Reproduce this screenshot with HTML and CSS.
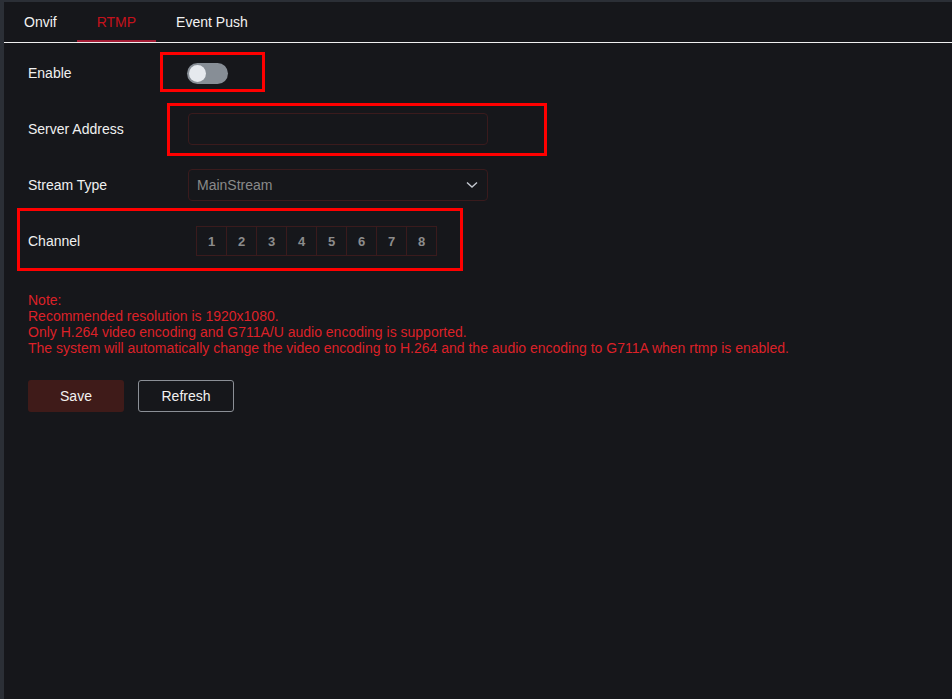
FILE: index.html
```html
<!DOCTYPE html>
<html>
<head>
<meta charset="utf-8">
<link rel="stylesheet" href="styles.css">
</head>
<body>
<div class="frame">
  <div class="tabs">
    <div class="tab">Onvif</div>
    <div class="tab active">RTMP</div>
    <div class="tab">Event Push</div>
  </div>
  <div class="form">
    <div class="row">
      <div class="label">Enable</div>
      <div class="switch"><span class="knob"></span></div>
    </div>
    <div class="row">
      <div class="label">Server Address</div>
      <div class="input"></div>
    </div>
    <div class="row">
      <div class="label">Stream Type</div>
      <div class="input select">
        <span class="value">MainStream</span>
        <svg class="chev" width="12" height="8" viewBox="0 0 12 8"><path d="M1 1.5 L6 6 L11 1.5" fill="none" stroke="#c4c8d0" stroke-width="1.4"/></svg>
      </div>
    </div>
    <div class="row">
      <div class="label">Channel</div>
      <div class="channels">
        <div class="ch">1</div><div class="ch">2</div><div class="ch">3</div><div class="ch">4</div>
        <div class="ch">5</div><div class="ch">6</div><div class="ch">7</div><div class="ch">8</div>
      </div>
    </div>
    <div class="note">
      <div>Note:</div>
      <div>Recommended resolution is 1920x1080.</div>
      <div>Only H.264 video encoding and G711A/U audio encoding is supported.</div>
      <div>The system will automatically change the video encoding to H.264 and the audio encoding to G711A when rtmp is enabled.</div>
    </div>
    <div class="buttons">
      <button class="btn save">Save</button>
      <button class="btn refresh">Refresh</button>
    </div>
  </div>
  <div class="mark m1"></div>
  <div class="mark m2"></div>
  <div class="mark m3"></div>
</div>
</body>
</html>
```

FILE: styles.css
```css
html, body {
  margin: 0;
  padding: 0;
  width: 952px;
  height: 699px;
  overflow: hidden;
  background: #2b2f36;
  font-family: "Liberation Sans", Arial, sans-serif;
  font-size: 14px;
}
.frame {
  position: relative;
  margin: 2px 0 0 4px;
  height: 697px;
  background: #16171b;
}
.tabs {
  display: flex;
  height: 40px;
  border-bottom: 1px solid #f0f0f0;
}
.tab {
  padding: 0 20px;
  height: 38px;
  line-height: 40px;
  color: #f2f2f2;
  border-bottom: 2px solid transparent;
}
.tab.active {
  color: #c4121c;
  border-bottom-color: #a51d36;
}
.form {
  padding: 14px 0 0 24px;
}
.row {
  display: flex;
  align-items: center;
  height: 32px;
  margin-bottom: 24px;
}
.label {
  width: 160px;
  color: #f0f0f0;
}
.switch {
  position: relative;
  width: 41px;
  height: 21px;
  border-radius: 11px;
  background: #878e96;
  margin-left: -1px;
}
.knob {
  position: absolute;
  left: 2px;
  top: 2px;
  width: 17px;
  height: 17px;
  border-radius: 50%;
  background: #e6e9ee;
}
.input {
  box-sizing: border-box;
  width: 300px;
  height: 32px;
  border: 1px solid #3a1b1d;
  border-radius: 4px;
  background: #16171b;
}
.select {
  display: flex;
  align-items: center;
  justify-content: space-between;
  padding: 0 9px 0 8px;
}
.value {
  color: #8a8a8a;
}
.chev {
  display: block;
}
.channels {
  display: flex;
  margin-left: 8px;
}
.ch {
  box-sizing: border-box;
  width: 31px;
  height: 30px;
  border: 1px solid #3a1b1d;
  margin-left: -1px;
  display: flex;
  align-items: center;
  justify-content: center;
  color: #8c8c8c;
  font-size: 13px;
  font-weight: bold;
}
.ch:first-child {
  margin-left: 0;
}
.note {
  margin-top: 35px;
  color: #dc2128;
  line-height: 16px;
}
.buttons {
  display: flex;
  gap: 14px;
  margin-top: 24px;
}
.btn {
  box-sizing: border-box;
  width: 96px;
  height: 32px;
  border-radius: 3px;
  font-family: "Liberation Sans", Arial, sans-serif;
  font-size: 14px;
  color: #f2f2f2;
  padding: 0;
}
.save {
  background: #3f1b19;
  border: none;
}
.refresh {
  background: transparent;
  border: 1px solid #8b8f96;
}
.mark {
  position: absolute;
  box-sizing: border-box;
  border: 3px solid #ff0000;
}
.m1 { left: 156px; top: 50px; width: 105px; height: 40px; }
.m2 { left: 163px; top: 101px; width: 380px; height: 53px; }
.m3 { left: 13px; top: 206px; width: 446px; height: 63px; }
```
